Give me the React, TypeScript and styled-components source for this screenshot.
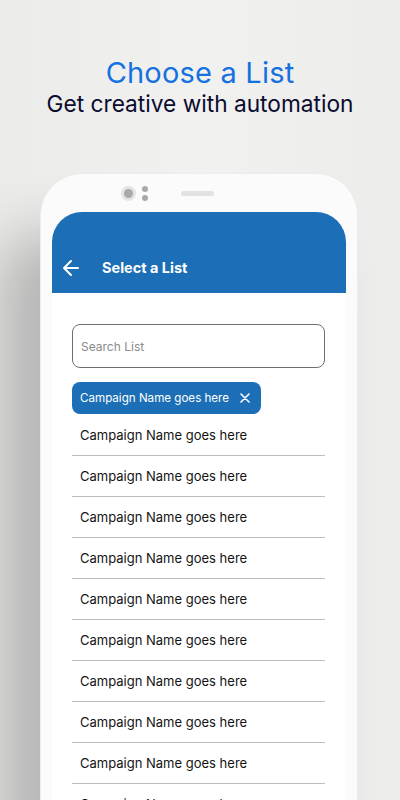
import styled, { createGlobalStyle } from "styled-components";

const GlobalStyle = createGlobalStyle`
  html, body {
    margin: 0;
    padding: 0;
    height: 800px;
    overflow: hidden;
    background: #efefee;
    font-family: Inter, "Noto Sans", sans-serif;
  }
`;

const Page = styled.div`
  width: 400px;
  height: 800px;
  overflow: hidden;
  background: linear-gradient(90deg, #ebebea 0%, #f1f1f0 50%, #ececeb 100%);
`;

const Heading = styled.div`
  display: flex;
  flex-direction: column;
  align-items: center;
  padding-top: 56px;
`;

const Title = styled.h1`
  margin: 0;
  font-size: 29px;
  font-weight: 400;
  line-height: 34px;
  color: #1671e0;
  letter-spacing: 0.2px;
`;

const Subtitle = styled.p`
  margin: 0;
  font-size: 22.7px;
  font-weight: 400;
  line-height: 28px;
  color: #0b0b2e;
`;

const Phone = styled.div`
  margin: 55px 0 0 40px;
  width: 318px;
  height: 700px;
  box-sizing: border-box;
  padding: 0 11px 0 11px;
  background: #fbfbfb;
  border: 1px solid #ececec;
  border-radius: 42px;
  box-shadow: -40px 60px 60px rgba(0, 0, 0, 0.24);
`;

const Sensors = styled.div`
  height: 38px;
  display: flex;
  align-items: center;
  padding-left: 69px;
  gap: 6px;
`;

const Camera = styled.div`
  width: 15px;
  height: 15px;
  border-radius: 50%;
  background: #e4e4e4;
  display: flex;
  align-items: center;
  justify-content: center;
  &::after {
    content: "";
    width: 9px;
    height: 9px;
    border-radius: 50%;
    background: #a9a9a9;
  }
`;

const Dots = styled.div`
  display: flex;
  flex-direction: column;
  gap: 3px;
  span {
    width: 6px;
    height: 6px;
    border-radius: 50%;
    background: #a9a9a9;
  }
`;

const Speaker = styled.div`
  margin-left: 27px;
  width: 33px;
  height: 5px;
  border-radius: 3px;
  background: #e2e2e2;
`;

const Screen = styled.div`
  background: #fff;
  height: 640px;
  border-radius: 30px 30px 0 0;
  overflow: hidden;
`;

const AppBar = styled.div`
  height: 81px;
  background: #1c6fb6;
  display: flex;
  align-items: flex-end;
  padding: 0 0 12px 10px;
  box-sizing: border-box;
  gap: 22px;
  color: #fff;
`;

const BarTitle = styled.span`
  font-size: 14.5px;
  font-weight: 700;
  line-height: 26px;
`;

const Body = styled.div`
  padding: 31px 21px 0 20px;
  display: flex;
  flex-direction: column;
`;

const Search = styled.div`
  height: 44px;
  box-sizing: border-box;
  border: 1px solid #6f6f6f;
  border-radius: 8px;
  display: flex;
  align-items: center;
  padding-left: 8px;
  font-size: 12px;
  color: #8a8a8a;
`;

const Chip = styled.div`
  margin-top: 14px;
  align-self: flex-start;
  height: 32px;
  box-sizing: border-box;
  padding: 0 11px 0 8px;
  background: #1c6fb6;
  border-radius: 8px;
  display: flex;
  align-items: center;
  gap: 11px;
  color: #fff;
  font-size: 11.6px;
`;

const Row = styled.div`
  height: 41px;
  box-sizing: border-box;
  border-bottom: 1px solid #bdbdbd;
  display: flex;
  align-items: center;
  padding-left: 8px;
  font-size: 13px;
  color: #141414;
`;

const FirstRow = styled(Row)`
  height: 42px;
  padding-top: 1px;
  padding-bottom: 1px;
`;

const rows = Array.from({ length: 9 });

export default function App() {
  return (
    <Page>
      <GlobalStyle />
      <Heading>
        <Title>Choose a List</Title>
        <Subtitle>Get creative with automation</Subtitle>
      </Heading>
      <Phone>
        <Sensors>
          <Camera />
          <Dots>
            <span />
            <span />
          </Dots>
          <Speaker />
        </Sensors>
        <Screen>
          <AppBar>
            <svg width="18" height="26" viewBox="0 0 18 26" fill="none" stroke="#fff" strokeWidth="2" strokeLinecap="round" strokeLinejoin="round">
              <path d="M16 13H2M9 6l-7 7 7 7" />
            </svg>
            <BarTitle>Select a List</BarTitle>
          </AppBar>
          <Body>
            <Search>Search List</Search>
            <Chip>
              Campaign Name goes here
              <svg width="10" height="10" viewBox="0 0 10 10" stroke="#fff" strokeWidth="1.6" strokeLinecap="round">
                <path d="M1 1l8 8M9 1l-8 8" />
              </svg>
            </Chip>
            <FirstRow>Campaign Name goes here</FirstRow>
            {rows.map((_, i) => (
              <Row key={i}>Campaign Name goes here</Row>
            ))}
          </Body>
        </Screen>
      </Phone>
    </Page>
  );
}
